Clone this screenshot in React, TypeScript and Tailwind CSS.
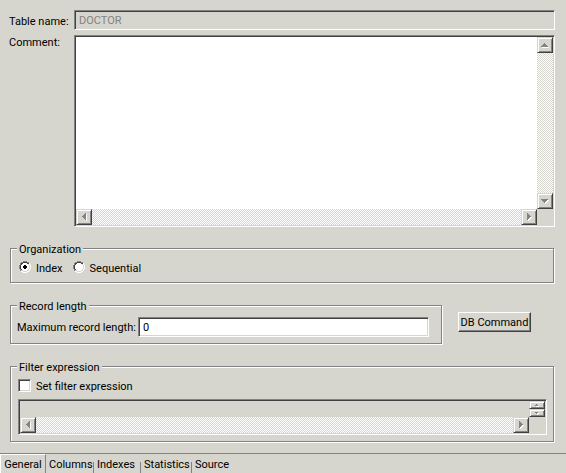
import type { ReactNode } from "react";

const sunken =
    "border border-t-[#848284] border-l-[#848284] border-r-white border-b-white shadow-[inset_1px_1px_#424142,inset_-1px_-1px_#d6d6ce]";
const etched =
    "min-w-0 border border-[#848284] shadow-[1px_1px_#fff,inset_1px_1px_#fff]";
const track =
    "bg-[repeating-conic-gradient(#fff_0_25%,#d6d6ce_0_50%)] bg-[length:2px_2px]";

const arrows = {
    up: "M3 0h1v1h1v1h1v1h1v1H0V3h1V2h1V1h1z",
    down: "M0 0h7v1H6v1H5v1H4v1H3V3H2V2H1V1H0z",
    left: "M3 0h1v7H3V6H2V5H1V4H0V3h1V2h1V1h1z",
    right: "M0 0h1v1h1v1h1v1h1v1H3v1H2v1H1v1H0z",
    smallUp: "M1 0h1v1h1v1H0V1h1z",
    smallDown: "M0 0h3v1H2v1H1V1H0z",
};

const sizes = {
    up: [7, 4],
    down: [7, 4],
    left: [4, 7],
    right: [4, 7],
    smallUp: [3, 2],
    smallDown: [3, 2],
};

type Direction = keyof typeof arrows;

const ScrollButton = ({ dir, label, half }: { dir: Direction; label: string; half?: boolean }) => {
    const [w, h] = sizes[dir];
    return (
        <button
            type="button"
            aria-label={label}
            className={`flex w-4 shrink-0 items-center justify-center border border-t-[#d6d6ce] border-l-[#d6d6ce] border-r-[#424142] border-b-[#424142] bg-[#d6d6ce] shadow-[inset_1px_1px_#fff,inset_-1px_-1px_#848284] ${half ? "h-2" : "h-4"}`}
        >
            <svg width={w + 1} height={h + 1} shapeRendering="crispEdges" aria-hidden="true">
                <path d={arrows[dir]} fill="#fff" transform="translate(1 1)" />
                <path d={arrows[dir]} fill="#848284" />
            </svg>
        </button>
    );
};

const HorizontalBar = () => (
    <div className="flex h-4">
        <ScrollButton dir="left" label="Scroll left" />
        <div className={`flex-1 ${track}`} />
        <ScrollButton dir="right" label="Scroll right" />
        <div className="w-4" />
    </div>
);

const Radio = ({ label, checked }: { label: string; checked?: boolean }) => (
    <label className="flex items-start gap-[5px]">
        <span className="relative size-3">
            <input
                type="radio"
                name="organization"
                defaultChecked={checked}
                className="peer block size-3 appearance-none rounded-full bg-white"
            />
            <svg
                className="pointer-events-none absolute inset-0 [&_.dot]:hidden peer-checked:[&_.dot]:block"
                width="12"
                height="12"
                shapeRendering="crispEdges"
                aria-hidden="true"
            >
                <path fill="#848284" d="M4 0h4v1H4zM2 1h2v1H2zM8 1h2v1H8zM1 2h1v2H1zM0 4h1v4H0zM1 8h1v2H1z" />
                <path fill="#424142" d="M4 1h4v1H4zM2 2h2v1H2zM8 2h2v1H8zM2 3h1v1H2zM1 4h1v4H1zM2 8h1v1H2z" />
                <path fill="#d6d6ce" d="M9 3h1v1H9zM10 4h1v4h-1zM9 8h1v1H9zM2 9h2v1H2zM8 9h2v1H8zM4 10h4v1H4z" />
                <path fill="#fff" d="M10 2h1v2h-1zM11 4h1v4h-1zM10 8h1v2h-1zM2 10h2v1H2zM8 10h2v1H8zM4 11h4v1H4z" />
                <path className="dot" fill="#000" d="M5 4h2v1h1v2H7v1H5V7H4V5h1z" />
            </svg>
        </span>
        <span>{label}</span>
    </label>
);

const Legend = ({ children }: { children: ReactNode }) => (
    <legend className="ml-1.5 h-[13px] bg-[#d6d6ce] px-0.5">{children}</legend>
);

const tabs = [
    { name: "Columns", width: "w-12" },
    { name: "Indexes", width: "w-[47px]" },
    { name: "Statistics", width: "w-[51px]" },
    { name: "Source", width: "w-12" },
];

const App = () => {
    return (
        <div className="bg-[#d6d6ce] font-['Tahoma','Roboto','DejaVu_Sans',sans-serif] text-[11px] leading-4 text-black">
            <form className="pt-2.5 pr-3 pb-[11px] pl-2.5">
                <div className="-mr-px -ml-px grid grid-cols-[65px_1fr] gap-y-[5px]">
                    <label htmlFor="table-name" className="pt-1 whitespace-nowrap">Table name:</label>
                    <input
                        id="table-name"
                        disabled
                        defaultValue="DOCTOR"
                        className={`h-5 w-full px-1 text-[#848284] ${sunken}`}
                    />
                    <label htmlFor="comment" className="whitespace-nowrap">Comment:</label>
                    <div className={`p-px ${sunken}`}>
                        <div className="flex">
                            <textarea
                                id="comment"
                                className="block h-[172px] min-w-0 flex-1 resize-none bg-white px-1 outline-none"
                            />
                            <div className="flex flex-col">
                                <ScrollButton dir="up" label="Scroll up" />
                                <div className={`flex-1 ${track}`} />
                                <ScrollButton dir="down" label="Scroll down" />
                            </div>
                        </div>
                        <HorizontalBar />
                    </div>
                </div>

                <fieldset className={`mt-[15px] ${etched}`}>
                    <Legend>Organization</Legend>
                    <div className="flex gap-2.5 px-2 pt-1.5 pb-[5px]">
                        <Radio label="Index" checked />
                        <Radio label="Sequential" />
                    </div>
                </fieldset>

                <div className="mt-4 flex items-start gap-4">
                    <fieldset className={`flex-1 ${etched}`}>
                        <Legend>Record length</Legend>
                        <div className="flex items-center gap-0.5 pt-[5px] pr-3 pb-1.5 pl-1.5">
                            <label htmlFor="max-length" className="pt-0.5 whitespace-nowrap">Maximum record length:</label>
                            <input
                                id="max-length"
                                defaultValue="0"
                                className={`h-5 min-w-0 flex-1 bg-white px-1 ${sunken}`}
                            />
                        </div>
                    </fieldset>
                    <button
                        type="button"
                        className="mt-[13px] mr-[23px] h-5 w-[73px] border border-t-white border-l-white border-r-[#424142] border-b-[#424142] pt-0.5 whitespace-nowrap shadow-[inset_-1px_-1px_#848284]"
                    >
                        DB Command
                    </button>
                </div>

                <fieldset className={`mt-4 ${etched}`}>
                    <Legend>Filter expression</Legend>
                    <div className="px-[7px] pt-1.5 pb-1.5">
                        <label className="flex items-start gap-[5px]">
                            <input
                                type="checkbox"
                                className={`size-[13px] appearance-none bg-white checked:bg-[#424142] ${sunken}`}
                            />
                            <span>Set filter expression</span>
                        </label>
                        <div className={`mt-1 -mr-px p-px ${sunken}`}>
                            <div className="flex">
                                <textarea
                                    aria-label="Filter expression"
                                    disabled
                                    className="block h-4 min-w-0 flex-1 resize-none overflow-hidden px-1"
                                />
                                <div className="flex flex-col">
                                    <ScrollButton dir="smallUp" label="Scroll filter up" half />
                                    <ScrollButton dir="smallDown" label="Scroll filter down" half />
                                </div>
                            </div>
                            <HorizontalBar />
                        </div>
                    </div>
                </fieldset>
            </form>

            <nav className="flex h-5 items-end border-t border-[#848284]">
                <button
                    type="button"
                    className="h-[19px] w-[46px] border-t border-r border-l border-t-white border-r-[#848284] border-l-white pt-px text-center"
                >
                    General
                </button>
                {tabs.map(({ name, width }) => (
                    <div key={name} className={`flex items-end justify-between ${width}`}>
                        <button type="button" className="h-[19px] pt-0.5 pl-[3px]">{name}</button>
                        {name !== "Source" && <span className="h-[11px] w-px bg-[#848284]" />}
                    </div>
                ))}
            </nav>
        </div>
    );
};

export default App;
